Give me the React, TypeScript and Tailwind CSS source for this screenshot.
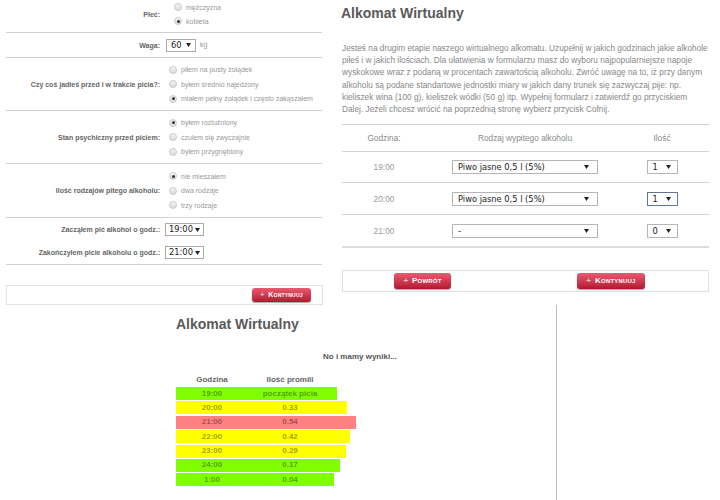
import React from "react";

const Tri = () => (
  <svg width="5" height="4" viewBox="0 0 5 4" className="shrink-0">
    <polygon points="0,0 5,0 2.5,4" fill="#222" />
  </svg>
);

const Select = ({ text, cls }: { text: string; cls: string }) => (
  <div className={`flex items-center justify-between border bg-white ${cls}`}>
    <span className="font-['DejaVu_Sans'] text-[8.3px] leading-none text-[#222]">{text}</span>
    <Tri />
  </div>
);

const Radio = ({ checked, label, h }: { checked?: boolean; label: string; h: string }) => (
  <div className={`flex items-center ${h}`}>
    <span className="ml-[3px] flex h-[8px] w-[8px] items-center justify-center rounded-full border border-[#c9c9c9] bg-linear-to-b from-[#f6f6f6] to-[#dadada]">
      {checked && <span className="h-[3px] w-[3px] rounded-full bg-[#333]" />}
    </span>
    <span className="ml-[4px] whitespace-nowrap text-[7px] leading-none text-[#999]">{label}</span>
  </div>
);

const Button = ({ label, cls, size }: { label: string; cls: string; size: string }) => (
  <div
    className={`flex items-center justify-center rounded-[3px] bg-linear-to-b from-[#e85a72] to-[#b3142e] font-bold text-white shadow-[0_1px_1px_rgba(0,0,0,0.35)] [font-variant:small-caps] ${size} ${cls}`}
  >
    <span className="mr-[4px] text-[#f6b9c4]">+</span>
    <span className="tracking-[0.2px]">{label}</span>
  </div>
);

const Label = ({ children }: { children: React.ReactNode }) => (
  <div className="w-[154px] shrink-0 whitespace-nowrap text-right text-[7px] font-bold leading-none text-[#666]">
    {children}
  </div>
);

function LeftPanel() {
  return (
    <div className="w-[340px] shrink-0">
      <div className="ml-[6px] w-[316px]">
        <div className="flex h-[33px] items-center border-b border-[#cfcfcf] pb-[4px]">
          <Label>Płeć:</Label>
          <div className="ml-[11px] flex flex-col">
            <Radio h="h-[14px]" label="mężczyzna" />
            <Radio h="h-[14px]" checked label="kobieta" />
          </div>
        </div>
        <div className="flex h-[25px] items-center border-b border-[#cfcfcf]">
          <Label>Waga:</Label>
          <div className="ml-[6px] flex items-center">
            <Select text="60" cls="h-[13px] w-[30px] border-[#aaa] pl-[4px] pr-[4px]" />
            <span className="ml-[4px] text-[7px] text-[#999]">kg</span>
          </div>
        </div>
        <div className="flex h-[53px] items-center border-b border-[#cfcfcf]">
          <Label>Czy coś jadłeś przed i w trakcie picia?:</Label>
          <div className="ml-[6px] flex flex-col">
            <Radio h="h-[14.5px]" label="piłem na pusty żołądek" />
            <Radio h="h-[14.5px]" label="byłem średnio najedzony" />
            <Radio h="h-[14.5px]" checked label="miałem pełny żołądek i często zakąszałem" />
          </div>
        </div>
        <div className="flex h-[53px] items-center border-b border-[#cfcfcf]">
          <Label>Stan psychiczny przed piciem:</Label>
          <div className="ml-[6px] flex flex-col">
            <Radio h="h-[14.5px]" checked label="byłem rozluźniony" />
            <Radio h="h-[14.5px]" label="czułem się zwyczajnie" />
            <Radio h="h-[14.5px]" label="byłem przygnębiony" />
          </div>
        </div>
        <div className="flex h-[54px] items-center border-b border-[#cfcfcf]">
          <Label>Ilość rodzajów pitego alkoholu:</Label>
          <div className="ml-[6px] flex flex-col">
            <Radio h="h-[14.5px]" checked label="nie mieszałem" />
            <Radio h="h-[14.5px]" label="dwa rodzaje" />
            <Radio h="h-[14.5px]" label="trzy rodzaje" />
          </div>
        </div>
        <div className="flex h-[47px] flex-col border-b border-[#cfcfcf]">
          <div className="flex h-[23px] items-center">
            <Label>Zacząłem pić alkohol o godz.:</Label>
            <div className="ml-[5px]">
              <Select text="19:00" cls="h-[13px] w-[39px] border-[#aaa] pl-[3px] pr-[3px]" />
            </div>
          </div>
          <div className="flex h-[23px] items-center">
            <Label>Zakończyłem picie alkoholu o godz.:</Label>
            <div className="ml-[5px]">
              <Select text="21:00" cls="h-[13px] w-[39px] border-[#aaa] pl-[3px] pr-[3px]" />
            </div>
          </div>
        </div>
        <div className="mt-[20px] flex h-[20px] w-[317px] items-center justify-end border border-[#e2e2e2] pr-[11px]">
          <Button label="Kontynuuj" size="text-[7px]" cls="h-[14px] w-[59px]" />
        </div>
      </div>
    </div>
  );
}

const paragraph = [
  "Jesteś na drugim etapie naszego wirtualnego alkomatu. Uzupełnij w jakich godzinach jakie alkohole",
  "piłeś i w jakich ilościach. Dla ułatwienia w formularzu masz do wyboru najpopularniejsze napoje",
  "wyskokowe wraz z podaną w procentach zawartością alkoholu. Zwróć uwagę na to, iż przy danym",
  "alkoholu są podane standartowe jednostki miary w jakich dany trunek się zazwyczaj pije: np.",
  "kieliszek wina (100 g), kieliszek wódki (50 g) itp. Wypełnij formularz i zatwierdź go przyciskiem",
  "Dalej. Jeżeli chcesz wrócić na poprzednią stronę wybierz przycisk Cofnij.",
];

const tableRows = [
  { t: "19:00", d: "Piwo jasne 0,5 l (5%)", q: "1", h: "h-[31px] border-b border-[#d4d4d4]", f: false },
  { t: "20:00", d: "Piwo jasne 0,5 l (5%)", q: "1", h: "h-[32px] border-b border-[#d4d4d4]", f: true },
  { t: "21:00", d: "-", q: "0", h: "h-[33px] border-b-2 border-[#dcdcdc]", f: false },
];

function RightPanel() {
  return (
    <div className="w-[380px] shrink-0 pl-[1px] pr-[11px]">
      <div className="pt-[5px] text-[14px] font-bold leading-[16px] text-[#5a5a5a]">Alkomat Wirtualny</div>
      <div className="mt-[21px] ml-[1px] text-[8.3px] leading-[12.2px] text-[#888]">
        {paragraph.map((l, i) => (
          <div key={i} className="whitespace-nowrap">
            {l}
          </div>
        ))}
      </div>
      <div className="mt-[9px] ml-[1px] border-t border-[#cfcfcf]">
        <div className="grid h-[27px] grid-cols-[84px_198px_76px_1fr] items-center border-b border-[#d4d4d4] text-[8.3px] text-[#8a8a8a]">
          <div className="text-center">Godzina:</div>
          <div className="text-center">Rodzaj wypitego alkoholu</div>
          <div className="text-center">Ilość</div>
          <div />
        </div>
        {tableRows.map((r) => (
          <div key={r.t} className={`grid grid-cols-[84px_198px_76px_1fr] items-center ${r.h}`}>
            <div className="text-center text-[8.3px] text-[#999]">{r.t}</div>
            <div className="flex justify-center">
              <Select text={r.d} cls="h-[14px] w-[146px] border-[#b5b5b5] pl-[5px] pr-[8px]" />
            </div>
            <div className="flex justify-center">
              <Select
                text={r.q}
                cls={
                  r.f
                    ? "h-[14px] w-[31px] border-[#5f7890] pl-[5px] pr-[6px]"
                    : "h-[14px] w-[31px] border-[#b5b5b5] pl-[5px] pr-[6px]"
                }
              />
            </div>
            <div />
          </div>
        ))}
      </div>
      <div className="mt-[22px] ml-[1px] flex h-[22px] items-center border border-[#e0e0e0] pl-[51px]">
        <Button label="Powrót" size="text-[8px]" cls="h-[16px] w-[57px]" />
        <Button label="Kontynuuj" size="text-[8px]" cls="ml-[126px] h-[16px] w-[68px]" />
      </div>
    </div>
  );
}

const results = [
  { t: "19:00", v: "początek picia", c: "bg-[#80ff00]", w: "w-[161px]" },
  { t: "20:00", v: "0.33", c: "bg-[#ffff00]", w: "w-[171px]" },
  { t: "21:00", v: "0.54", c: "bg-[#ff8080]", w: "w-[180px]" },
  { t: "22:00", v: "0.42", c: "bg-[#ffff00]", w: "w-[174px]" },
  { t: "23:00", v: "0.29", c: "bg-[#ffff00]", w: "w-[170px]" },
  { t: "24:00", v: "0.17", c: "bg-[#80ff00]", w: "w-[164px]" },
  { t: "1:00", v: "0.04", c: "bg-[#80ff00]", w: "w-[158px]" },
];

function BottomPanel() {
  return (
    <div className="flex h-[195px]">
      <div className="w-[557px] shrink-0 border-r border-[#bdbdbd] pl-[176px]">
        <div className="pt-[11px] text-[14px] font-bold leading-[16px] text-[#5a5a5a]">Alkomat Wirtualny</div>
        <div className="mt-[20px] ml-[147px] text-[8px] font-bold leading-[10px] text-[#555]">No i mamy wyniki...</div>
        <div className="mt-[13px] flex text-[8px] font-bold leading-[10px] text-[#666]">
          <div className="w-[72px] text-center">Godzina</div>
          <div className="w-[84px] text-center">Ilość promili</div>
        </div>
        <div className="mt-[2px] flex flex-col gap-[1.4px]">
          {results.map((r) => (
            <div key={r.t} className={`flex h-[13px] items-center ${r.c} ${r.w}`}>
              <div className="w-[72px] text-center text-[8px] font-bold leading-none text-black/40">{r.t}</div>
              <div className="w-[84px] text-center text-[8px] font-bold leading-none text-black/40">{r.v}</div>
            </div>
          ))}
        </div>
      </div>
    </div>
  );
}

export default function App() {
  return (
    <div className="h-[500px] w-[720px] overflow-hidden bg-white font-['Liberation_Sans',Arial,sans-serif]">
      <div className="flex h-[305px]">
        <LeftPanel />
        <RightPanel />
      </div>
      <BottomPanel />
    </div>
  );
}
